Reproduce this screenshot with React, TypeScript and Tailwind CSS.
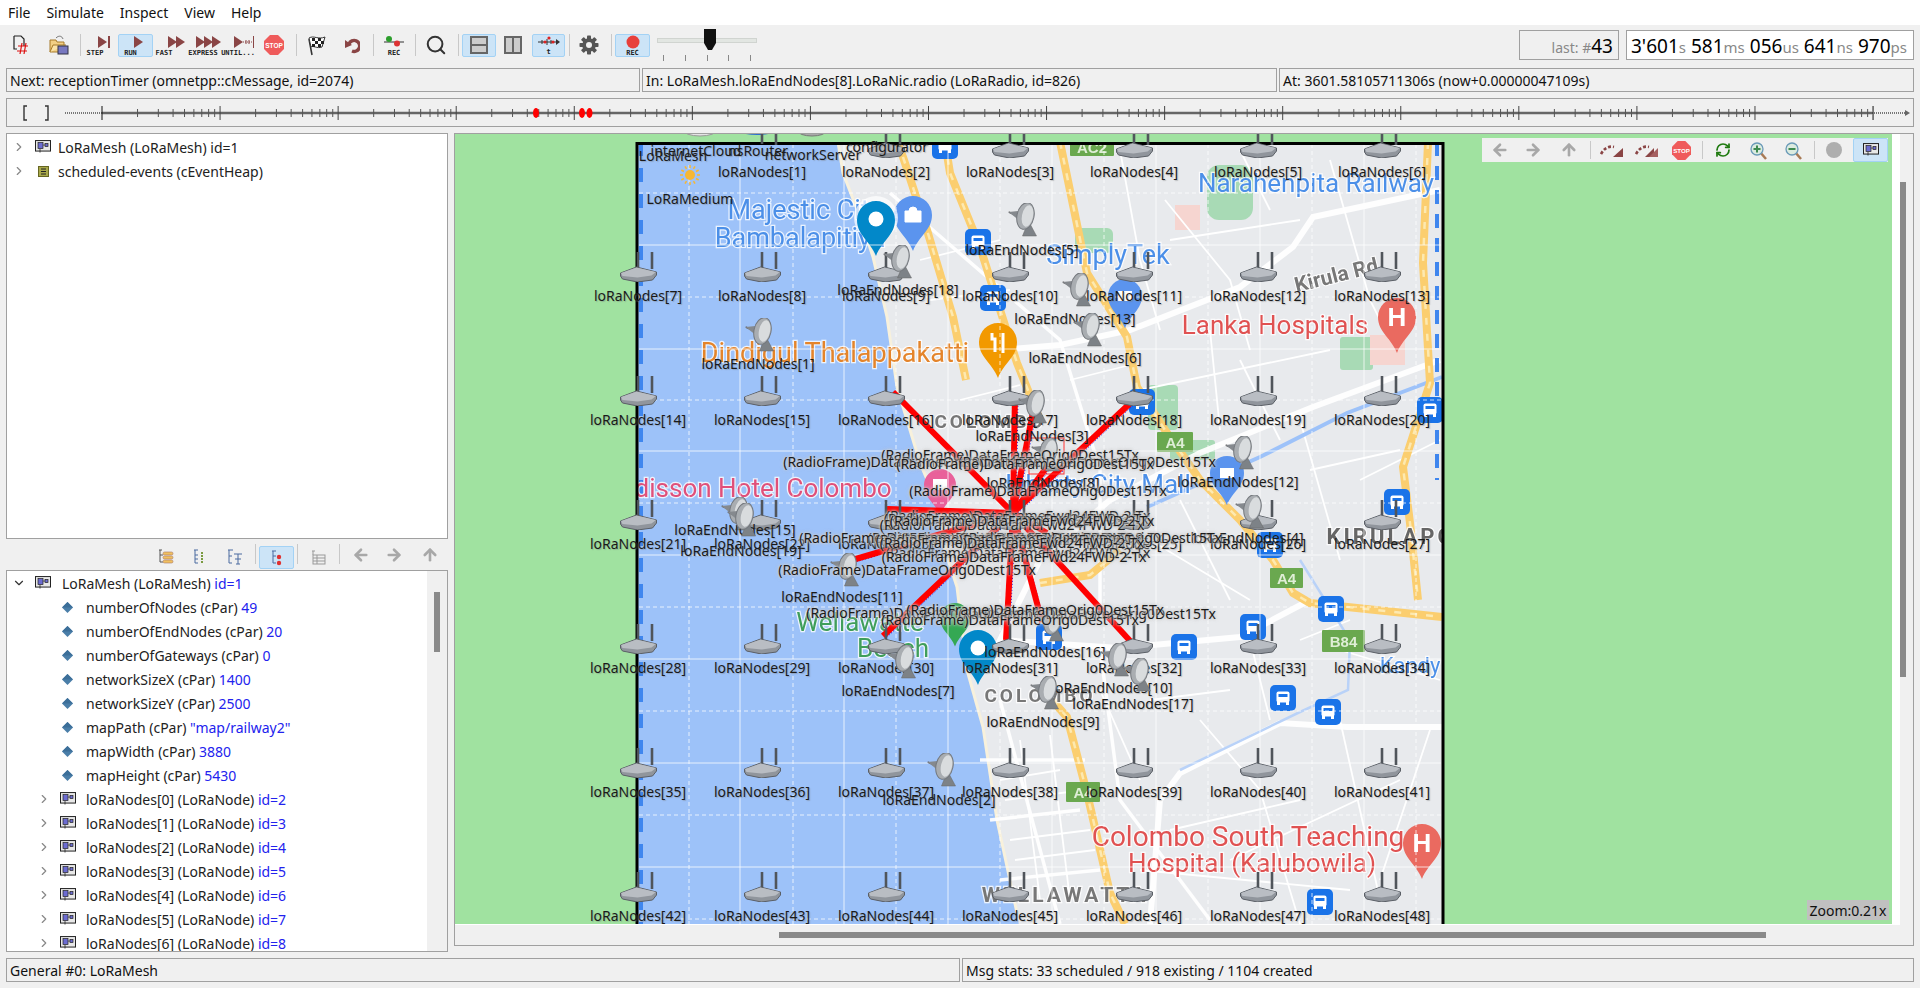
import { ArrowLeft, ArrowRight, ArrowUp, ChevronDown, ChevronRight, RefreshCw, Search } from "lucide-react";
import type { ReactNode } from "react";

const OX = 455;
const OY = 134;

const uiFont = "[font-family:'Noto_Sans',sans-serif]";

/* ---------- toolbar icons ---------- */
const Tri = ({ x }: { x: number }) => <polygon points={`${x},1 ${x + 9},7 ${x},13`} fill="#8a4545" />;

function StepIcon() {
  return <svg width="12" height="14" viewBox="0 0 12 14"><Tri x={0} /><rect x="10" y="1" width="2" height="12" fill="#8a4545" /></svg>;
}
function RunIcon() {
  return <svg width="10" height="14" viewBox="0 0 10 14"><Tri x={0} /></svg>;
}
function FastIcon() {
  return <svg width="17" height="14" viewBox="0 0 17 14"><Tri x={0} /><Tri x={8} /></svg>;
}
function ExpressIcon() {
  return <svg width="25" height="14" viewBox="0 0 25 14"><Tri x={0} /><Tri x={8} /><Tri x={16} /></svg>;
}
function UntilIcon() {
  return (
    <svg width="20" height="14" viewBox="0 0 20 14">
      <Tri x={0} />
      <line x1="9" y1="7" x2="19" y2="7" stroke="#8a4545" strokeWidth="1" strokeDasharray="1 1" />
      <line x1="12" y1="5" x2="12" y2="9" stroke="#8a4545" />
      <line x1="15" y1="5" x2="15" y2="9" stroke="#8a4545" />
      <rect x="19" y="1" width="1" height="12" fill="#8a4545" />
    </svg>
  );
}
function StopIcon({ size = 20 }: { size?: number }) {
  return (
    <svg width={size} height={size} viewBox="0 0 20 20">
      <polygon points="6,0 14,0 20,6 20,14 14,20 6,20 0,14 0,6" fill="#ef5b5b" />
      <text x="10" y="12.6" textAnchor="middle" fontSize="6.5" fontWeight="700" fill="#fff" fontFamily="Liberation Sans">STOP</text>
    </svg>
  );
}
function NewIcon() {
  return (
    <svg width="16" height="20" viewBox="0 0 16 20">
      <path d="M1 1h7l3 3v7M1 1v13h3" fill="none" stroke="#222" strokeWidth="1.2" />
      <path d="M9 8l-2 11M13 8l-2 11M5 11h10M4 16h10" stroke="#d11" strokeWidth="1.2" />
    </svg>
  );
}
function OpenIcon() {
  return (
    <svg width="20" height="21" viewBox="0 0 20 21">
      <path d="M1 5h6l1 2h7v10H1z" fill="#f2cf85" stroke="#a77b2a" />
      <path d="M1 17l3-7h13" fill="#fbe3a8" stroke="#a77b2a" />
      <path d="M7 3c3-3 6-2 7 1" fill="none" stroke="#777" />
      <rect x="9" y="11" width="10" height="8" fill="#7878c0" stroke="#334" />
    </svg>
  );
}
function FlagIcon() {
  return (
    <svg width="18" height="21" viewBox="0 0 18 21">
      <path d="M4 20L1 4" stroke="#333" strokeWidth="1.5" />
      <path d="M1 3c5-3 9 2 16-1l-3 10c-5 2-9-2-11 0z" fill="#fff" stroke="#333" />
      <path d="M4 3h3v3H4zM10 3h3v3h-3zM7 6h3v3H7zM13 6h3v3h-3zM4 9h3v3H4zM10 9h3v3h-3z" fill="#222" />
    </svg>
  );
}
function RewindIcon() {
  return (
    <svg width="16" height="18" viewBox="0 0 16 18">
      <path d="M5 8a5.5 5.5 0 1 1 3 7" fill="none" stroke="#8a4545" strokeWidth="3.4" />
      <polygon points="1,4 8,9 1,12" fill="#8a4545" />
    </svg>
  );
}
function RecLineIcon() {
  return (
    <svg width="20" height="14" viewBox="0 0 20 14">
      <line x1="0" y1="7" x2="20" y2="7" stroke="#333" />
      <circle cx="5" cy="4" r="3" fill="#2c9e2c" />
      <circle cx="13" cy="8.5" r="3" fill="#d33" />
    </svg>
  );
}
function SplitIcon({ vertical }: { vertical?: boolean }) {
  return (
    <svg width="18" height="20" viewBox="0 0 18 20">
      <rect x="1" y="2" width="16" height="16" fill="#ccc" stroke="#666" strokeWidth="2" />
      {vertical ? <line x1="9" y1="2" x2="9" y2="18" stroke="#666" strokeWidth="2" /> : <line x1="1" y1="10" x2="17" y2="10" stroke="#666" strokeWidth="2" />}
    </svg>
  );
}
function TimelineIcon() {
  return (
    <svg width="22" height="12" viewBox="0 0 22 12">
      <line x1="0" y1="6" x2="20" y2="6" stroke="#333" />
      <polygon points="18,3 22,6 18,9" fill="#333" />
      <path d="M4 4v4M9 3v6M13 4v4" stroke="#333" />
      <circle cx="7" cy="6" r="1.6" fill="#d22" />
      <circle cx="11" cy="2" r="1.6" fill="#d22" />
      <circle cx="15" cy="6" r="1.6" fill="#d22" />
    </svg>
  );
}
function GearIcon() {
  return (
    <svg width="20" height="20" viewBox="0 0 20 20">
      {[0, 45, 90, 135].map(a => <rect key={a} x="8" y="0.5" width="4" height="19" rx="0.8" fill="#555" transform={`rotate(${a} 10 10)`} />)}
      <circle cx="10" cy="10" r="6.8" fill="#555" />
      <circle cx="10" cy="10" r="3" fill="#f0f0f0" />
    </svg>
  );
}
function ModuleIcon({ size = 16 }: { size?: number }) {
  return (
    <svg width={size} height={size * 0.82} viewBox="0 0 16 13" className="shrink-0">
      <rect x="0.5" y="0.5" width="15" height="10.5" fill="#e8e8e8" stroke="#222" />
      <rect x="3" y="2.5" width="5" height="6" fill="#6c6cd0" stroke="#222" strokeWidth="0.7" />
      <rect x="10" y="3.5" width="3" height="3" fill="#6c6cd0" stroke="#222" strokeWidth="0.7" />
      <line x1="8" y1="5" x2="10" y2="5" stroke="#222" strokeWidth="0.7" />
      <line x1="5" y1="9" x2="5" y2="12.5" stroke="#222" strokeWidth="0.8" />
    </svg>
  );
}

function Tool({ children, label, className, on, iconShift = "", labelShift = "" }: { children: ReactNode; label?: string; className: string; on?: boolean; iconShift?: string; labelShift?: string }) {
  return (
    <div className={`h-[23px] flex flex-col items-center justify-center shrink-0 rounded-[2px] ${className} ${on ? "bg-[#cce4f7] border border-[#a3d2f5]" : ""}`}>
      <div className={`flex ${iconShift}`}>{children}</div>
      {label && <span className={`text-[7px] leading-[6px] mt-[1px] text-[#222] whitespace-nowrap [font-family:'DejaVu_Sans_Mono',monospace] font-bold ${labelShift}`}>{label}</span>}
    </div>
  );
}
const Sep = ({ className }: { className: string }) => <div className={`w-px h-[22px] bg-[#c8c8c8] shrink-0 ${className}`} />;

function Toolbar() {
  return (
    <div className="h-[40px] flex items-center shrink-0 pl-[2px]">
      <Tool className="w-[38px]"><NewIcon /></Tool>
      <Tool className="w-[38px]"><OpenIcon /></Tool>
      <Sep className="ml-[2px]" />
      <Tool className="w-[36px]" label="STEP" iconShift="translate-x-[5px]" labelShift="-translate-x-[4px]"><StepIcon /></Tool>
      <Tool className="w-[35px] ml-[1px]" label="RUN" on iconShift="translate-x-[3px]" labelShift="-translate-x-[5px]"><RunIcon /></Tool>
      <Tool className="w-[32px]" label="FAST" iconShift="translate-x-[7px]" labelShift="-translate-x-[5px]"><FastIcon /></Tool>
      <Tool className="w-[38px]" label="EXPRESS" iconShift="translate-x-[4px]" labelShift="-translate-x-[1px]"><ExpressIcon /></Tool>
      <Tool className="w-[32px]" label="UNTIL..." iconShift="translate-x-[5px]" labelShift="-translate-x-[1px]"><UntilIcon /></Tool>
      <Tool className="w-[38px]"><StopIcon /></Tool>
      <Sep className="ml-[3px]" />
      <Tool className="w-[40px]"><FlagIcon /></Tool>
      <Tool className="w-[30px]"><RewindIcon /></Tool>
      <Sep className="ml-[6px]" />
      <Tool className="w-[40px]" label="REC"><RecLineIcon /></Tool>
      <Sep className="ml-px" />
      <Tool className="w-[40px]"><Search size={22} strokeWidth={2.2} color="#333" /></Tool>
      <Sep className="ml-[2px]" />
      <Tool className="w-[34px] ml-[3px]" on><SplitIcon /></Tool>
      <Tool className="w-[34px]"><SplitIcon vertical /></Tool>
      <Tool className="w-[33px] ml-[2px]" label="t" on><TimelineIcon /></Tool>
      <Sep className="ml-[4px]" />
      <Tool className="w-[38px]"><GearIcon /></Tool>
      <Sep className="ml-[3px]" />
      <Tool className="w-[35px] ml-[3px]" label="REC" on><svg width="14" height="14"><circle cx="7" cy="7" r="6.5" fill="#e8403c" /></svg></Tool>
      <div className="relative w-[100px] h-[36px] ml-[7px] shrink-0">
        <div className="absolute left-0 right-0 top-[11px] h-[5px] bg-[#e2e6e2] border border-[#d0d4d0]" />
        <svg className="absolute left-[46px] top-[2px]" width="14" height="22" viewBox="0 0 14 22"><path d="M1 0h12v14l-4 7H5l-4-7z" fill="#111" /></svg>
        <div className="absolute left-0 right-0 top-[28px] flex justify-between px-[6px]">
          {[0, 1, 2, 3, 4].map(i => <div key={i} className="w-px h-[6px] bg-[#888]" />)}
        </div>
      </div>
      <div className="flex-1" />
      <div className={`w-[100px] h-[30px] border border-[#a0a0a0] flex items-end justify-end pr-[5px] pb-[1px] ${uiFont}`}>
        <span className="text-[14px] text-[#888]">last: #</span><span className="text-[19px] leading-[24px] text-black">43</span>
      </div>
      <div className={`w-[288px] h-[30px] ml-[7px] mr-[6px] border border-[#a0a0a0] bg-white flex items-end pl-[4px] pb-[1px] gap-[5px] ${uiFont}`}>
        {[["3'601", "s"], ["581", "ms"], ["056", "us"], ["641", "ns"], ["970", "ps"]].map(([n, u]) => (
          <span key={u} className="whitespace-nowrap"><span className="text-[19px] leading-[24px] text-black">{n}</span><span className="text-[15px] text-[#888]">{u}</span></span>
        ))}
      </div>
    </div>
  );
}

/* ---------- timeline ---------- */
function Timeline() {
  const majors = Array.from({ length: 16 }, (_, i) => 95 + i * 118.07);
  return (
    <div className="h-[29px] mx-[6px] mt-[6px] border border-[#a0a0a0] shrink-0 relative">
      <svg className="block" width="1906" height="27" viewBox="0 0 1906 27">
        <path d="M20 10h-3v14h3" transform="translate(0,-3)" fill="none" stroke="#333" strokeWidth="1.4" />
        <path d="M38 10h3v14h-3" transform="translate(0,-3)" fill="none" stroke="#333" strokeWidth="1.4" />
        <line x1="58" y1="14" x2="95" y2="14" stroke="#777" strokeWidth="2" strokeDasharray="1 1" />
        <line x1="95" y1="14" x2="1865" y2="14" stroke="#666" strokeWidth="2.5" />
        <line x1="1865" y1="14" x2="1900" y2="14" stroke="#777" strokeWidth="2" strokeDasharray="1 1" />
        <polygon points="1898,11 1903,14 1898,17" fill="#666" />
        {majors.map((x, i) => (
          <g key={i}>
            <line x1={x} y1="7" x2={x} y2="21" stroke={i === 0 || i === 15 ? "#111" : "#444"} strokeWidth="1" />
            {i < 15 && [2, 3, 4, 5, 6, 7, 8, 9].map(k => {
              const t = x + Math.log10(k) * 118.07;
              return <line key={k} x1={t} y1="10" x2={t} y2="18" stroke="#555" strokeWidth="1" />;
            })}
          </g>
        ))}
        <ellipse cx="529" cy="14" rx="3" ry="5" fill="#f00" />
        <ellipse cx="575" cy="14" rx="3" ry="5" fill="#f00" />
        <ellipse cx="582.5" cy="14" rx="3" ry="5" fill="#f00" />
      </svg>
    </div>
  );
}

/* ---------- left trees ---------- */
const Blue = ({ children }: { children: ReactNode }) => <span className="text-[#2222ee]">{children}</span>;

function Diamond() {
  return <svg width="11" height="11" viewBox="0 0 11 11" className="shrink-0"><polygon points="5.5,0 11,5.5 5.5,11 0,5.5" fill="#4a7ea8" /><polygon points="5.5,0 11,5.5 0,5.5" fill="#3c6f99" /></svg>;
}

function ParamRow({ name, value }: { name: string; value: string }) {
  return (
    <div className="h-[24px] flex items-center pl-[55px] whitespace-nowrap">
      <Diamond />
      <span className="ml-[13px]">{name} (cPar) <Blue>{value}</Blue></span>
    </div>
  );
}
function NodeRow({ i }: { i: number }) {
  return (
    <div className="h-[24px] flex items-center pl-[30px] whitespace-nowrap">
      <ChevronRight size={14} color="#888" strokeWidth={2} />
      <span className="ml-[9px]"><ModuleIcon /></span>
      <span className="ml-[10px]">loRaNodes[{i}] (LoRaNode) <Blue>id={i + 2}</Blue></span>
    </div>
  );
}

function LeftPane() {
  return (
    <div className={`w-[442px] shrink-0 flex flex-col text-[14px] text-[#222] ${uiFont}`}>
      <div className="h-[406px] bg-white border border-[#a0a0a0] pt-[1px]">
        <div className="h-[24px] flex items-center pl-[5px]">
          <ChevronRight size={14} color="#888" />
          <span className="ml-[9px]"><ModuleIcon /></span>
          <span className="ml-[7px]">LoRaMesh (LoRaMesh) id=1</span>
        </div>
        <div className="h-[24px] flex items-center pl-[5px]">
          <ChevronRight size={14} color="#888" />
          <svg width="11" height="11" viewBox="0 0 11 11" className="ml-[12px]"><rect x="0.5" y="0.5" width="10" height="10" fill="#a9a94a" stroke="#666622" /><path d="M3 3h5M3 5.5h5M3 8h5" stroke="#222" /></svg>
          <span className="ml-[9px]">scheduled-events (cEventHeap)</span>
        </div>
      </div>
      <div className="h-[31px] flex items-center shrink-0 relative">
        <svg className="absolute left-[152px] top-[10px]" width="16" height="16" viewBox="0 0 16 16"><path d="M1 1h3M2 1v12h3M2 6h3" stroke="#555" fill="none" /><rect x="5" y="3" width="10" height="3" rx="1.5" fill="#f0c060" stroke="#a76" strokeWidth=".6" /><rect x="5" y="7" width="10" height="3" rx="1.5" fill="#f0c060" stroke="#a76" strokeWidth=".6" /><rect x="5" y="11" width="10" height="3" rx="1.5" fill="#f0c060" stroke="#a76" strokeWidth=".6" /></svg>
        <svg className="absolute left-[187px] top-[10px]" width="12" height="16" viewBox="0 0 12 16"><path d="M1 1h4M2 1v13h3M2 6h3M2 10h3" stroke="#4a6aa0" fill="none" /><path d="M8 4h2M8 7h2M8 10h2M8 13h2" stroke="#7a9a40" strokeWidth="2" /></svg>
        <svg className="absolute left-[221px] top-[10px]" width="16" height="16" viewBox="0 0 16 16"><path d="M1 1h5M2 1v13h3M2 7h3" stroke="#4a6aa0" fill="none" /><path d="M7 5h8M11 5v10M9 15h4M8 10h6" stroke="#4a6aa0" fill="none" /></svg>
        <div className="absolute left-[249px] top-[5px] w-px h-[20px] bg-[#c8c8c8]" />
        <div className="absolute left-[253px] top-[7px] w-[35px] h-[23px] bg-[#cce4f7] border border-[#a3d2f5] rounded-[2px] flex items-center justify-center">
          <svg width="11" height="16" viewBox="0 0 11 16"><path d="M1 1h4M2 1v12h3M2 6h3" stroke="#4a6aa0" fill="none" /><circle cx="8" cy="7" r="2.2" fill="#e03030" /><circle cx="8" cy="13" r="2.2" fill="#e03030" /></svg>
        </div>
        <div className="absolute left-[291px] top-[5px] w-px h-[20px] bg-[#c8c8c8]" />
        <svg className="absolute left-[305px] top-[11px]" width="15" height="15" viewBox="0 0 15 15"><path d="M1 1h3M2 1v4" stroke="#999" /><rect x="2" y="5" width="12" height="9" fill="none" stroke="#999" /><path d="M2 8h12M2 11h12M6 5v9" stroke="#999" /></svg>
        <div className="absolute left-[333px] top-[5px] w-px h-[20px] bg-[#c8c8c8]" />
        <ArrowLeft className="absolute left-[346px] top-[7px]" size={18} color="#a8a8a8" strokeWidth={3.5} />
        <ArrowRight className="absolute left-[379px] top-[7px]" size={18} color="#a8a8a8" strokeWidth={3.5} />
        <ArrowUp className="absolute left-[415px] top-[7px]" size={18} color="#a8a8a8" strokeWidth={3.5} />
      </div>
      <div className="h-[382px] flex bg-white border border-[#a0a0a0] overflow-hidden">
        <div className="flex-1 overflow-hidden">
          <div className="h-[24px] flex items-center pl-[5px] whitespace-nowrap">
            <ChevronDown size={14} color="#333" strokeWidth={2} />
            <span className="ml-[9px]"><ModuleIcon /></span>
            <span className="ml-[11px]">LoRaMesh (LoRaMesh) <Blue>id=1</Blue></span>
          </div>
          <ParamRow name="numberOfNodes" value="49" />
          <ParamRow name="numberOfEndNodes" value="20" />
          <ParamRow name="numberOfGateways" value="0" />
          <ParamRow name="networkSizeX" value="1400" />
          <ParamRow name="networkSizeY" value="2500" />
          <ParamRow name="mapPath" value={'"map/railway2"'} />
          <ParamRow name="mapWidth" value="3880" />
          <ParamRow name="mapHeight" value="5430" />
          {[0, 1, 2, 3, 4, 5, 6].map(i => <NodeRow key={i} i={i} />)}
        </div>
        <div className="w-[20px] bg-[#f0f0f0] relative shrink-0">
          <div className="absolute left-[7px] top-[21px] w-[6px] h-[60px] bg-[#8a8a8a]" />
        </div>
      </div>
    </div>
  );
}

/* ---------- map ---------- */
function Pin({ x, y, r, fill, children }: { x: number; y: number; r: number; fill: string; children?: ReactNode }) {
  return (
    <g>
      <path d={`M${x - r} ${y}a${r} ${r} 0 1 1 ${2 * r} 0c0 ${r * 0.8} ${-r * 0.7} ${r * 1.1} ${-r} ${r * 1.9}c${-r * 0.3} ${-r * 0.8} ${-r} ${-r * 1.1} ${-r} ${-r * 1.9}z`} fill={fill} />
      {children}
    </g>
  );
}
function Bus({ x, y }: { x: number; y: number }) {
  return (
    <g transform={`translate(${x - 13},${y - 13})`}>
      <rect width="26" height="26" rx="5" fill="#1a73e8" />
      <rect x="6.5" y="6.5" width="13" height="11" rx="2" fill="#fff" />
      <rect x="8.5" y="9" width="9" height="3" fill="#1a73e8" />
      <rect x="7" y="17" width="3" height="3" fill="#fff" />
      <rect x="16" y="17" width="3" height="3" fill="#fff" />
    </g>
  );
}
function Shield({ x, y, w, h, text }: { x: number; y: number; w: number; h: number; text: string }) {
  return (
    <g>
      <rect x={x} y={y} width={w} height={h} rx="1" fill="#6aa84f" />
      <text x={x + w / 2} y={y + h / 2 + 5.5} textAnchor="middle" fontSize="15" fontWeight="700" fill="#dfeed6" fontFamily="Liberation Sans">{text}</text>
    </g>
  );
}

const majorRoads = [
  "M897 142L903 157L927 230L953 317L966 380",
  "M945 142L950 173L980 247L1017 363L1040 420",
  "M1060 142L1087 273L1127 337L1137 387L1165 430L1200 480L1240 520L1273 560L1293 593L1310 603L1442 617",
  "M1428 142L1423 263L1430 383L1403 467L1410 523L1418 600",
  "M1040 583L1090 575L1120 550",
  "M1052 700L1067 717L1087 793L1110 893L1125 924",
];
const whiteRoads = [
  "M1440 190L1313 217L1293 247L1240 287L1130 330L1060 345L1000 350",
  "M1440 360L1313 407L1200 453L1110 500L1040 560L1000 640L1120 648L1240 637L1310 600",
  "M1442 727L1347 727L1280 723L1180 773L1160 800L1150 924",
  "M890 193L1060 340L1100 470L1100 620",
  "M1100 648L1120 800L1210 920",
  "M980 760L1085 760M990 820L1080 810M1000 880L1100 870",
  "M1000 700L1060 924",
];
const thinRoads = [
  "M1120 150L1140 260L1160 330", "M1240 150L1270 210", "M1330 160L1370 300L1390 340", "M1165 200L1230 280L1250 350",
  "M1170 240L1300 220", "M1140 390L1330 350", "M1240 360L1280 440", "M1300 420L1340 560", "M1180 500L1230 600", "M1150 540L1250 600",
  "M1340 650L1440 680", "M1250 640L1270 720", "M1340 720L1380 900", "M1200 720L1260 790L1300 924", "M1150 700L1230 690", "M1100 690L1140 780",
  "M1360 480L1440 440", "M1300 640L1350 620", "M1000 780L1060 770", "M1005 800L1085 790", "M1010 840L1090 830", "M1015 860L1095 850",
  "M1020 740L1040 900", "M1050 735L1070 900", "M920 260L1000 240", "M930 300L1010 290", "M960 400L1020 385", "M1170 830L1300 800", "M1230 860L1400 780",
  "M1140 870L1350 890", "M1430 730L1380 880", "M1070 380L1130 365", "M1210 330L1220 430", "M1310 470L1400 450",
];
const mapTexts: { x: number; y: number; t: string; c: string; s: number; w?: number; sp?: number }[] = [
  { x: 805, y: 219, t: "Majestic City", c: "#4b8fe8", s: 27 },
  { x: 800, y: 247, t: "Bambalapitiya", c: "#4b8fe8", s: 27 },
  { x: 835, y: 362, t: "Dindigul Thalappakatti", c: "#e4842a", s: 27 },
  { x: 748, y: 497, t: "Radisson Hotel Colombo", c: "#e0507a", s: 26 },
  { x: 860, y: 631, t: "Wellawatte", c: "#3f9e5a", s: 26 },
  { x: 893, y: 657, t: "Beach", c: "#3f9e5a", s: 26 },
  { x: 1108, y: 264, t: "SimplyTek", c: "#4b8fe8", s: 27 },
  { x: 1275, y: 334, t: "Lanka Hospitals", c: "#e05252", s: 26 },
  { x: 1316, y: 192, t: "Narahenpita Railway", c: "#4b8fe8", s: 26 },
  { x: 1098, y: 493, t: "Liberty City Mall", c: "#4b8fe8", s: 26 },
  { x: 1248, y: 846, t: "Colombo South Teaching", c: "#e05252", s: 28 },
  { x: 1252, y: 872, t: "Hospital (Kalubowila)", c: "#e05252", s: 26 },
  { x: 1040, y: 702, t: "COLOMBO", c: "#777", s: 19, w: 700, sp: 3 },
  { x: 990, y: 428, t: "COLOMBO", c: "#777", s: 19, w: 700, sp: 3 },
  { x: 1065, y: 902, t: "WELLAWATTA", c: "#777", s: 21, w: 700, sp: 3 },
  { x: 1408, y: 544, t: "KIRULAPONE", c: "#666", s: 22, w: 700, sp: 3 },
  { x: 1410, y: 673, t: "Kandy", c: "#4b8fe8", s: 22 },
];

function MapBackdrop() {
  return (
    <svg className="absolute left-0 top-0 blur-[0.6px]" width="1437" height="790" viewBox={`${OX} ${OY} 1437 790`}>
      <defs><clipPath id="mapclip"><rect x="637" y="142" width="806" height="790" /></clipPath></defs>
      <g clipPath="url(#mapclip)">
        <rect x="637" y="142" width="806" height="790" fill="#e8eaed" />
        <rect x="1207" y="165" width="46" height="55" rx="12" fill="#a8dab5" />
        <rect x="1075" y="228" width="38" height="25" rx="6" fill="#a8dab5" />
        <rect x="1340" y="337" width="33" height="33" rx="3" fill="#a8dab5" />
        <rect x="1148" y="385" width="30" height="45" rx="4" fill="#a8dab5" />
        <rect x="1170" y="440" width="45" height="20" rx="3" fill="#a8dab5" />
        <rect x="1175" y="205" width="25" height="25" fill="#f6d5d0" />
        <rect x="1370" y="335" width="35" height="30" fill="#f6d5d0" />
        <path d="M637 142H838L843 173L860 217L873 257L887 317L897 387L910 430L920 463L940 510L945 550L957 587L967 670L983 727L997 820L1017 913L1020 932H637Z" fill="#9dc2f9" />
        <path d="M838 142L843 173L860 217L873 257L887 317L897 387L910 430L920 463L940 510L945 550L957 587L967 670L983 727L997 820L1017 913" fill="none" stroke="#f8f1dc" strokeWidth="3" />
        {thinRoads.map((d, i) => <path key={i} d={d} fill="none" stroke="#fff" strokeWidth="1.8" />)}
        {whiteRoads.map((d, i) => <path key={i} d={d} fill="none" stroke="#fff" strokeOpacity="0.92" strokeWidth={i < 3 ? 6 : 3.5} />)}
        <path d="M1442 377L1347 413L1260 457L1147 507" fill="none" stroke="#9dc2f9" strokeWidth="4" />
        <path d="M1300 560L1350 640L1348 690L1300 712L1180 770" fill="none" stroke="#b9d2f8" strokeWidth="2.5" />
        <path d="M1090 142H1440" stroke="#2f7de8" strokeWidth="4" strokeDasharray="12 8" />
        <path d="M641 142V932" stroke="#3f86ee" strokeWidth="4" strokeDasharray="14 12" />
        <path d="M1437 142V480" stroke="#3f86ee" strokeWidth="4" strokeDasharray="14 10" />
        {majorRoads.map((d, i) => <g key={i}><path d={d} fill="none" stroke="#fbce6f" strokeWidth="8" /><path d={d} fill="none" stroke="#fde9b0" strokeWidth="2.5" strokeDasharray="7 9" /></g>)}
        <Shield x={1157} y={432} w={36} h={20} text="A4" />
        <Shield x={1270} y={568} w={33} h={20} text="A4" />
        <Shield x={1322} y={630} w={43} h={22} text="B84" />
        <Shield x={1066} y={782} w={34} h={20} text="A4" />
        <Shield x={1070} y={138} w={44} h={18} text="AC2" />
        {mapTexts.map(m => (
          <text key={m.t + m.y} x={m.x} y={m.y} textAnchor="middle" fontSize={m.s} fontWeight={m.w ?? 400} letterSpacing={m.sp ?? 0} fill={m.c} stroke="#fff" strokeWidth="2.5" paintOrder="stroke" strokeOpacity="0.8" fontFamily="Roboto, sans-serif">{m.t}</text>
        ))}
        <text x="0" y="0" transform="translate(1338,282) rotate(-14)" textAnchor="middle" fontSize="21" fontWeight="700" fill="#777" stroke="#fff" strokeWidth="2" paintOrder="stroke" fontFamily="Roboto, sans-serif">Kirula Rd</text>
        {[[945, 146], [978, 242], [993, 298], [1142, 402], [1430, 410], [1397, 502], [1270, 545], [1049, 637], [1184, 647], [1253, 627], [1331, 609], [1283, 698], [1328, 712], [1320, 902]].map(([x, y]) => <Bus key={`${x}-${y}`} x={x} y={y} />)}
        <Pin x={913} y={215} r={19} fill="#5b94ee"><path d="M905 211h16v11h-16zM909 211a4 4 0 0 1 8 0" fill="#fff" stroke="#fff" /></Pin>
        <circle cx="876" cy="218" r="22" fill="#fff" fillOpacity="0.7" />
        <Pin x={876} y={220} r={19} fill="#0288c9"><circle cx="876" cy="219" r="7.5" fill="#fff" /></Pin>
        <Pin x={998} y={342} r={19} fill="#f29900"><path d="M992 333v6h3v13M1003 333v20" stroke="#fff" strokeWidth="3" fill="none" /></Pin>
        <Pin x={1125} y={296} r={17} fill="#5b94ee"><rect x="1118" y="291" width="14" height="10" fill="#fff" /></Pin>
        <Pin x={1227} y={473} r={17} fill="#5b94ee"><rect x="1220" y="468" width="14" height="10" fill="#fff" /></Pin>
        <Pin x={940} y={485} r={16} fill="#e9609a"><rect x="933" y="479" width="14" height="11" fill="#fff" /></Pin>
        <Pin x={955} y={618} r={15} fill="#34a853" />
        <Pin x={978} y={649} r={19} fill="#0288c9"><circle cx="978" cy="648" r="7.5" fill="#fff" /></Pin>
        <Pin x={1397} y={317} r={19} fill="#ea6a60"><text x="1397" y="326" textAnchor="middle" fontSize="26" fontWeight="700" fill="#fff" fontFamily="Liberation Sans">H</text></Pin>
        <Pin x={1422} y={843} r={19} fill="#ea6a60"><text x="1422" y="852" textAnchor="middle" fontSize="26" fontWeight="700" fill="#fff" fontFamily="Liberation Sans">H</text></Pin>
      </g>
    </svg>
  );
}

function GridOverlay() {
  const solidV = [740, 844, 948, 1052, 1156, 1260, 1364];
  const dashV = [689, 793, 896, 1000, 1104, 1208, 1312, 1416];
  const solidH = [245, 349, 451, 555, 659, 763, 867];
  const dashH = [193, 297, 400, 503, 607, 711, 815, 919];
  const center = [1013, 513];
  const rays = [[893, 392], [1015, 394], [1037, 392], [1140, 394], [1052, 460], [887, 509], [973, 522], [1047, 533], [842, 563], [883, 636], [1006, 640], [1042, 622], [1132, 643]];
  return (
    <svg className="absolute left-0 top-0" width="1437" height="790" viewBox={`${OX} ${OY} 1437 790`}>
      {solidV.map(x => <line key={x} x1={x} y1="144" x2={x} y2="924" stroke="#fff" strokeOpacity="0.75" />)}
      {dashV.map(x => <line key={x} x1={x} y1="144" x2={x} y2="924" stroke="#fff" strokeOpacity="0.75" strokeDasharray="4 3" />)}
      {solidH.map(y => <line key={y} x1="639" y1={y} x2="1441" y2={y} stroke="#fff" strokeOpacity="0.75" />)}
      {dashH.map(y => <line key={y} x1="639" y1={y} x2="1441" y2={y} stroke="#fff" strokeOpacity="0.75" strokeDasharray="4 3" />)}
      <path d="M637 924V143.5H1443V924" fill="none" stroke="#000" strokeWidth="3" />
      <ellipse cx="700" cy="130" rx="17" ry="6" fill="#e4e4e4" stroke="#999" />
      <ellipse cx="757" cy="129" rx="20" ry="6" fill="#2f6fd0" />
      <ellipse cx="812" cy="131" rx="14" ry="5" fill="#aaa" stroke="#777" />
      {rays.map(([x, y]) => <line key={`b${x}`} x1={center[0] + 3} y1={center[1] + 2} x2={x + 3} y2={y + 2} stroke="#00f" strokeWidth="1" strokeDasharray="1 2" />)}
      {rays.map(([x, y]) => <line key={`r${x}`} x1={center[0]} y1={center[1]} x2={x} y2={y} stroke="#f00" strokeWidth="6" />)}
      <rect x="1029" y="438" width="35" height="36" fill="none" stroke="#f33" strokeWidth="1" />
    </svg>
  );
}

/* ---------- network nodes ---------- */
function RouterIcon({ bare }: { bare?: boolean }) {
  return (
    <svg width="39" height="30" viewBox="0 0 39 30" className="block">
      <path d="M18.5 0v16M32.5 0v17" stroke="#50555b" strokeWidth="2.6" />
      {!bare && <path d="M1 21L17 15L37 20L37 23L33 28L18 30L3 27Q0 24 1 21Z" fill="#90959c" stroke="#5a5f66" strokeWidth="1" />}
      {!bare && <path d="M1.5 21L17 15.5L36.5 20L32 23.5L18 25.5L3 24Z" fill="#b9bdc3" />}
    </svg>
  );
}
function DishIcon() {
  return (
    <svg width="29" height="34" viewBox="0 0 29 34" className="block">
      <polygon points="20,18 28,33 14,33" fill="#7d8287" stroke="#666" strokeWidth="0.5" />
      <path d="M0 9L14 15" stroke="#555" strokeWidth="1.4" />
      <path d="M0 9L10 8L9 16Z" fill="#85898e" />
      <ellipse cx="17" cy="13" rx="8.5" ry="13.5" transform="rotate(12 17 13)" fill="#a9adb1" stroke="#74787d" strokeWidth="1" />
      <ellipse cx="19" cy="13" rx="5.5" ry="11" transform="rotate(12 19 13)" fill="#d9dcde" />
    </svg>
  );
}

const labelClass = `absolute -translate-x-1/2 -translate-y-1/2 whitespace-nowrap text-[14px] leading-[18px] text-[#1a1a1a] [text-shadow:1px_1px_1px_rgba(120,120,120,0.4)] ${uiFont}`;
const frameClass = `absolute -translate-x-1/2 -translate-y-1/2 whitespace-nowrap text-[14px] leading-[18px] text-[#1a1a1a] [text-shadow:0_0_2px_rgba(205,205,205,0.95),0_0_3px_rgba(205,205,205,0.9),0_0_4px_rgba(205,205,205,0.8)] ${uiFont}`;

function Label({ x, y, children }: { x: number; y: number; children: ReactNode }) {
  return <div className={labelClass} style={{ left: x - OX, top: y - OY }}>{children}</div>;
}
function Placed({ x, y, children }: { x: number; y: number; children: ReactNode }) {
  return <div className="absolute -translate-x-1/2 -translate-y-1/2" style={{ left: x - OX, top: y - OY }}>{children}</div>;
}

const endNodes: [number, number, number, number, number][] = [
  [18, 898, 262, 898, 290], [5, 1023, 220, 1022, 250], [1, 760, 335, 758, 364], [13, 1077, 290, 1075, 319],
  [6, 1088, 330, 1085, 358], [3, 1033, 407, 1032, 436], [12, 1240, 453, 1238, 482], [4, 1250, 512, 1247, 538],
  [15, 736, 514, 735, 530], [19, 742, 520, 741, 551], [8, 1046, 455, 1043, 483], [11, 845, 570, 842, 597],
  [7, 902, 662, 898, 691], [16, 1050, 625, 1045, 652], [10, 1115, 660, 1112, 688], [17, 1137, 675, 1133, 704],
  [9, 1045, 693, 1043, 722], [2, 942, 770, 939, 800],
];
const origTx = "(RadioFrame)DataFrameOrig0Dest15Tx";
const fwdTx = "(RadioFrame)DataFrameFwd24FWD-2-Tx";
const frames: [number, number, string][] = [
  [1010, 455, origTx], [912, 462, origTx], [1087, 462, origTx], [1025, 464, origTx], [1038, 491, origTx],
  [1018, 516, fwdTx], [1016, 519, fwdTx], [1012, 525, fwdTx], [1030, 538, fwdTx], [1000, 538, fwdTx],
  [928, 538, origTx], [1093, 538, origTx], [1008, 540, fwdTx], [1018, 553, fwdTx],
  [1022, 521, fwdTx], [1012, 543, fwdTx], [1014, 557, fwdTx], [907, 570, origTx],
  [935, 613, origTx], [1087, 614, origTx], [1010, 620, origTx], [1035, 610, origTx],
];

function Network() {
  const routers = [];
  for (let r = 0; r < 7; r++) {
    for (let c = 0; c < 7; c++) {
      const i = r * 7 + c;
      if (i === 0) continue;
      const x = 638 + c * 124;
      const y = 172 + r * 124;
      routers.push(
        <div key={i}>
          <Placed x={x + 0.5} y={y - 29}><RouterIcon bare={i === 1} /></Placed>
          <Label x={x} y={y}>loRaNodes[{i}]</Label>
        </div>
      );
    }
  }
  return (
    <>
      <GridOverlay />
      {routers}
      <Placed x={690} y={175}>
        <svg width="22" height="22" viewBox="0 0 22 22"><circle cx="11" cy="11" r="5" fill="#f7b733" /><g stroke="#f7b733" strokeWidth="1.5">{[0, 30, 60, 90, 120, 150, 180, 210, 240, 270, 300, 330].map(a => <line key={a} x1="11" y1="1" x2="11" y2="4" transform={`rotate(${a} 11 11)`} />)}</g></svg>
      </Placed>
      <Label x={673} y={156}>LoRaMesh</Label>
      <Label x={696} y={151}>internetCloud</Label>
      <Label x={758} y={151}>nsRouter</Label>
      <Label x={813} y={155}>networkServer</Label>
      <Label x={887} y={147}>configurator</Label>
      <Label x={690} y={199}>LoRaMedium</Label>
      {endNodes.map(([n, ix, iy, lx, ly]) => (
        <div key={n}>
          <Placed x={ix} y={iy}><DishIcon /></Placed>
          <Label x={lx} y={ly}>loRaEndNodes[{n}]</Label>
        </div>
      ))}
      {frames.map(([x, y, t]) => <div key={`${x}-${y}`} className={frameClass} style={{ left: x - OX, top: y - OY }}>{t}</div>)}
    </>
  );
}

function CanvasTools() {
  const bar = "absolute top-[3px] w-px h-[18px] bg-[#c8c8c8]";
  return (
    <div className="absolute left-[1027px] top-[4px] w-[406px] h-[24px] bg-[#f0f0f0]">
      <ArrowLeft className="absolute left-[9px] top-[3px]" size={18} color="#a8a8a8" strokeWidth={3.5} />
      <ArrowRight className="absolute left-[42px] top-[3px]" size={18} color="#a8a8a8" strokeWidth={3.5} />
      <ArrowUp className="absolute left-[78px] top-[3px]" size={18} color="#a8a8a8" strokeWidth={3.5} />
      <div className={`${bar} left-[108px]`} />
      <svg className="absolute left-[118px] top-[6px]" width="23" height="13" viewBox="0 0 23 13"><path d="M1 10Q6 1 14 3" fill="none" stroke="#8a4545" strokeWidth="2.6" strokeDasharray="3 2" /><polygon points="13,13 23,4 23,13" fill="#8a4545" /></svg>
      <svg className="absolute left-[153px] top-[6px]" width="23" height="13" viewBox="0 0 23 13"><path d="M1 10Q6 1 14 3" fill="none" stroke="#8a4545" strokeWidth="2.6" strokeDasharray="3 2" /><polygon points="10,13 19,4 19,13" fill="#8a4545" /><polygon points="14,13 23,4 23,13" fill="#a56060" /></svg>
      <div className="absolute left-[190px] top-[3px]"><StopIcon size={19} /></div>
      <div className={`${bar} left-[220px]`} />
      <RefreshCw className="absolute left-[233px] top-[4px]" size={16} color="#1f7a10" strokeWidth={2.6} />
      <svg className="absolute left-[268px] top-[4px]" width="17" height="18" viewBox="0 0 17 18"><line x1="10" y1="10" x2="16" y2="17" stroke="#a87a55" strokeWidth="2.5" /><circle cx="7" cy="7" r="6" fill="#dcebe0" stroke="#6a9ab8" strokeWidth="1.3" /><path d="M3.5 7h7M7 3.5v7" stroke="#3e8a50" strokeWidth="2" /></svg>
      <svg className="absolute left-[303px] top-[4px]" width="17" height="18" viewBox="0 0 17 18"><line x1="10" y1="10" x2="16" y2="17" stroke="#a87a55" strokeWidth="2.5" /><circle cx="7" cy="7" r="6" fill="#dcebe0" stroke="#6a9ab8" strokeWidth="1.3" /><path d="M3.5 7h7" stroke="#3e8a50" strokeWidth="2" /></svg>
      <div className={`${bar} left-[332px]`} />
      <div className="absolute left-[344px] top-[4px] w-[16px] h-[16px] rounded-full bg-[#aeaeae]" />
      <div className="absolute left-[371px] top-0 w-[35px] h-[24px] bg-[#cce4f7] border border-[#a3d2f5] rounded-[2px] flex items-center justify-center">
        <ModuleIcon size={16} />
      </div>
    </div>
  );
}

function CanvasPane() {
  return (
    <div className="flex-1 h-[813px] border border-[#a0a0a0] relative bg-[#f0f0f0]">
      <div className="absolute left-0 top-0 w-[1437px] h-[790px] bg-[#a0e2a0] overflow-hidden">
        <MapBackdrop />
        <Network />
        <CanvasTools />
        <div className={`absolute left-[1352px] top-[766px] w-[82px] h-[20px] bg-[#c0c0c0] flex items-center justify-center text-[14px] text-[#111] ${uiFont}`}>Zoom:0.21x</div>
      </div>
      <div className="absolute left-[1437px] top-0 w-[8px] h-[791px] bg-white" />
      <div className="absolute left-0 top-[790px] w-[1445px] h-px bg-white" />
      <div className="absolute left-[1445px] top-[48px] w-[6px] h-[495px] bg-[#8a8a8a]" />
      <div className="absolute left-[324px] top-[798px] w-[987px] h-[6px] bg-[#8a8a8a]" />
    </div>
  );
}

export default function App() {
  return (
    <div className={`w-[1920px] h-[988px] overflow-hidden bg-[#f0f0f0] flex flex-col text-[14px] text-[#111] ${uiFont}`}>
      <div className="h-[25px] bg-white flex items-center gap-[16px] pl-[8px] shrink-0">
        <span>File</span><span>Simulate</span><span>Inspect</span><span>View</span><span>Help</span>
      </div>
      <Toolbar />
      <div className="flex mx-[6px] mt-[3px] gap-[2px] h-[24px] shrink-0">
        <div className="w-[634px] border border-[#a0a0a0] flex items-center pl-[3px]">Next: receptionTimer (omnetpp::cMessage, id=2074)</div>
        <div className="w-[635px] border border-[#a0a0a0] flex items-center pl-[3px]">In: LoRaMesh.loRaEndNodes[8].LoRaNic.radio (LoRaRadio, id=826)</div>
        <div className="flex-1 border border-[#a0a0a0] flex items-center pl-[3px]">At: 3601.58105711306s (now+0.00000047109s)</div>
      </div>
      <Timeline />
      <div className="flex gap-[6px] mx-[6px] mt-[6px] h-[819px] shrink-0">
        <LeftPane />
        <CanvasPane />
      </div>
      <div className="flex mx-[6px] mt-[6px] gap-[2px] h-[24px] shrink-0">
        <div className="w-[954px] border border-[#a0a0a0] flex items-center pl-[3px]">General #0: LoRaMesh</div>
        <div className="flex-1 border border-[#a0a0a0] flex items-center pl-[3px]">Msg stats: 33 scheduled / 918 existing / 1104 created</div>
      </div>
    </div>
  );
}
